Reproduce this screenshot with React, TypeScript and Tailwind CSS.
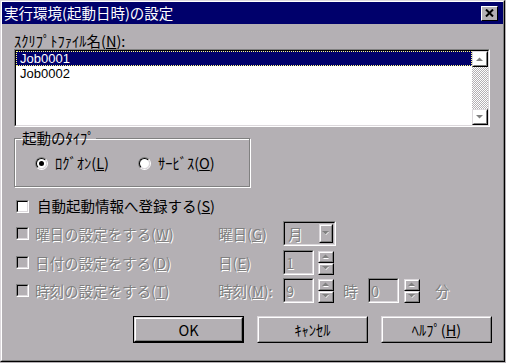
import React from 'react';

const DIS = 'text-[#808080] [text-shadow:1px_1px_0_#ffffff]';

function Sunken({ className, inner, children }: { className?: string; inner?: string; children?: React.ReactNode }) {
  return (
    <div className={`border border-t-[#808080] border-l-[#808080] border-r-white border-b-white ${className ?? ''}`}>
      <div className={`h-full border border-t-black border-l-black border-r-[#dcd8dc] border-b-[#dcd8dc] ${inner ?? ''}`}>
        {children}
      </div>
    </div>
  );
}

function Raised({ className, children }: { className?: string; children?: React.ReactNode }) {
  return (
    <div className={`border border-t-[#dcd8dc] border-l-[#dcd8dc] border-r-black border-b-black ${className ?? ''}`}>
      <div className="h-full border border-t-white border-l-white border-r-[#808080] border-b-[#808080] flex items-center justify-center">
        {children}
      </div>
    </div>
  );
}

function Arrow({ up, color = '#808080' }: { up?: boolean; color?: string }) {
  return (
    <svg width="8" height="5" viewBox="0 0 8 5" className="overflow-visible shrink-0">
      {up ? (
        <>
          <path d="M1 5 L4 2 L7 5 Z" fill="#ffffff" />
          <path d="M0 4 L3.5 0.5 L7 4 Z" fill={color} />
        </>
      ) : (
        <>
          <path d="M1 1 L4 4 L7 1 Z" fill="#ffffff" />
          <path d="M0 0 L3.5 3.5 L7 0 Z" fill={color} />
        </>
      )}
    </svg>
  );
}

function Check({ enabled }: { enabled?: boolean }) {
  return (
    <Sunken className="w-[13px] h-[13px] shrink-0" inner={enabled ? 'bg-white' : 'bg-[#b4b0b4]'} />
  );
}

function Radio({ checked }: { checked?: boolean }) {
  return (
    <div className="w-[13px] h-[13px] rounded-full border border-t-[#808080] border-l-[#808080] border-r-white border-b-white shrink-0">
      <div className="h-full rounded-full border border-t-black border-l-black border-r-[#dcd8dc] border-b-[#dcd8dc] bg-white flex items-center justify-center">
        {checked && <div className="w-[5px] h-[5px] rounded-full bg-black" />}
      </div>
    </div>
  );
}

function Spin() {
  return (
    <div className="flex flex-col w-[16px] h-[24px]">
      <Raised className="h-[12px]">
        <Arrow up />
      </Raised>
      <Raised className="h-[12px]">
        <Arrow />
      </Raised>
    </div>
  );
}

function Edit({ value }: { value: string }) {
  return (
    <Sunken className="w-[31px] h-[25px]" inner="px-[1px] flex items-center">
      <span className={DIS}>{value}</span>
    </Sunken>
  );
}

export default function App() {
  return (
    <div className="w-[506px] h-[363px] bg-[#b4b0b4] font-['Noto_Sans_CJK_JP',sans-serif] text-[14.5px] leading-[16px] text-black">
      <div className="w-[505px] h-[362px] border border-t-[#dcd8dc] border-l-[#dcd8dc] border-r-black border-b-black">
        <div className="h-full border border-t-white border-l-white border-r-[#808080] border-b-[#808080] flex flex-col">
          {/* title bar */}
          <div className="h-[22px] bg-[#00006b] flex items-center justify-between pl-[2px] pr-[5px]">
            <span className="text-white">実行環境(起動日時)の設定</span>
            <div className="w-[17px] h-[15px] bg-[#b4b0b4] border border-t-white border-l-white border-r-black border-b-black flex items-center justify-center">
              <svg width="9" height="8" viewBox="0 0 9 8" className="block shrink-0">
                <path d="M1 0.5 L8 7.5 M8 0.5 L1 7.5" stroke="#000000" strokeWidth="2" fill="none" />
              </svg>
            </div>
          </div>

          <div className="flex flex-col pl-[12px] pr-[11px]">
            <div className="mt-[9px] h-[16px]">
              ｽｸﾘﾌﾟﾄﾌｧｲﾙ名(<u>N</u>):
            </div>
            <Sunken className="w-[476px] h-[78px]" inner="bg-white flex">
              <div className="flex-1 flex flex-col font-['Liberation_Sans',sans-serif] text-[13px] leading-[15px]">
                <div className="h-[15px] bg-[#00006b] outline-1 outline-dotted outline-[#ffff80] -outline-offset-1 text-white pl-[4px]">
                  Job0001
                </div>
                <div className="h-[15px] pl-[4px]">Job0002</div>
              </div>
              <div className="w-[16px] flex flex-col">
                <Raised className="h-[16px]">
                  <Arrow up />
                </Raised>
                <div className="flex-1 bg-[repeating-conic-gradient(#ffffff_0_25%,#b4b0b4_0_50%)] bg-[length:2px_2px]" />
                <Raised className="h-[16px]">
                  <Arrow />
                </Raised>
              </div>
            </Sunken>

            <fieldset className="mt-[3px] w-[236px] border border-[#808080] shadow-[1px_1px_0_#ffffff,inset_1px_1px_0_#ffffff] pb-[15px]">
              <legend className="ml-[6px] px-[1px] h-[16px]">起動のﾀｲﾌﾟ</legend>
              <div className="mt-[9px] flex items-center h-[16px]">
                <div className="ml-[20px]">
                  <Radio checked />
                </div>
                <span className="ml-[7px]">ﾛｸﾞｵﾝ(<u>L</u>)</span>
                <div className="ml-[29px]">
                  <Radio />
                </div>
                <span className="ml-[7px]">ｻｰﾋﾞｽ(<u>O</u>)</span>
              </div>
            </fieldset>

            <div className="mt-[11px] flex items-center h-[16px] pl-[2px]">
              <Check enabled />
              <span className="ml-[8px]">自動起動情報へ登録する(<u>S</u>)</span>
            </div>

            <div className="mt-[7px] flex items-center h-[25px]">
              <div className="w-[204px] flex items-center pl-[2px]">
                <Check />
                <span className={`ml-[6px] ${DIS}`}>曜日の設定をする(<u>W</u>)</span>
              </div>
              <span className={`w-[65px] ${DIS}`}>曜日(<u>G</u>)</span>
              <Sunken className="w-[53px] h-[25px]" inner="flex items-center justify-between pl-[3px] pr-[1px]">
                <span className={DIS}>月</span>
                <Raised className="w-[14px] h-[19px]">
                  <Arrow />
                </Raised>
              </Sunken>
            </div>

            <div className="mt-[4px] flex items-center h-[25px]">
              <div className="w-[204px] flex items-center pl-[2px]">
                <Check />
                <span className={`ml-[6px] ${DIS}`}>日付の設定をする(<u>D</u>)</span>
              </div>
              <span className={`w-[65px] ${DIS}`}>日(<u>E</u>)</span>
              <Edit value="1" />
              <div className="ml-[4px]">
                <Spin />
              </div>
            </div>

            <div className="mt-[3px] flex items-center h-[25px]">
              <div className="w-[204px] flex items-center pl-[2px]">
                <Check />
                <span className={`ml-[6px] ${DIS}`}>時刻の設定をする(<u>T</u>)</span>
              </div>
              <span className={`w-[65px] ${DIS}`}>時刻(<u>M</u>):</span>
              <Edit value="9" />
              <div className="ml-[4px]">
                <Spin />
              </div>
              <span className={`ml-[9px] w-[25px] ${DIS}`}>時</span>
              <Edit value="0" />
              <div className="ml-[5px]">
                <Spin />
              </div>
              <span className={`ml-[15px] ${DIS}`}>分</span>
            </div>

            <div className="mt-[13px] flex justify-end gap-[13px]">
              <div className="border border-black">
                <Raised className="w-[109px] h-[25px]">OK</Raised>
              </div>
              <Raised className="w-[111px] h-[27px]">ｷｬﾝｾﾙ</Raised>
              <Raised className="w-[111px] h-[27px]">
                <span>ﾍﾙﾌﾟ(<u>H</u>)</span>
              </Raised>
            </div>
          </div>
        </div>
      </div>
    </div>
  );
}
